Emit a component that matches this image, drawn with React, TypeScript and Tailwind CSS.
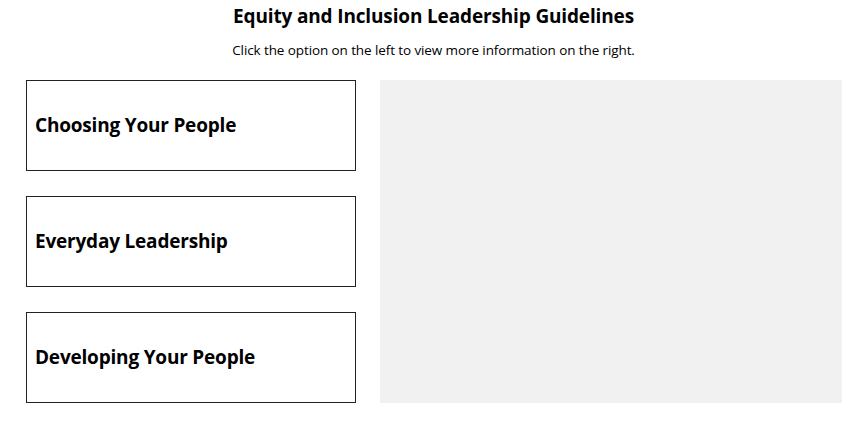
const items = ['Choosing Your People', 'Everyday Leadership', 'Developing Your People'];

export default function App() {
  return (
    <div className="min-h-[425px] bg-white text-black" style={{ fontFamily: '"Open Sans", "Noto Sans", sans-serif' }}>
      <h1 className="pt-[3px] text-center text-[19px] font-bold leading-[26px] tracking-[-0.15px]">
        Equity and Inclusion Leadership Guidelines
      </h1>
      <p className="mt-[11px] text-center text-[13.5px] leading-[20px] tracking-[-0.1px]">
        Click the option on the left to view more information on the right.
      </p>
      <div className="mt-[20px] flex gap-[24px] pl-[26px] pr-[25px]">
        <div className="flex w-[330px] flex-col gap-[25px]">
          {items.map(label => (
            <button
              key={label}
              className="flex h-[91px] items-center border border-[#222] bg-white px-[8px] text-left text-[19px] font-bold tracking-[-0.2px]"
            >
              {label}
            </button>
          ))}
        </div>
        <div className="h-[323px] flex-1 bg-[#f1f1f1]" />
      </div>
    </div>
  );
}
